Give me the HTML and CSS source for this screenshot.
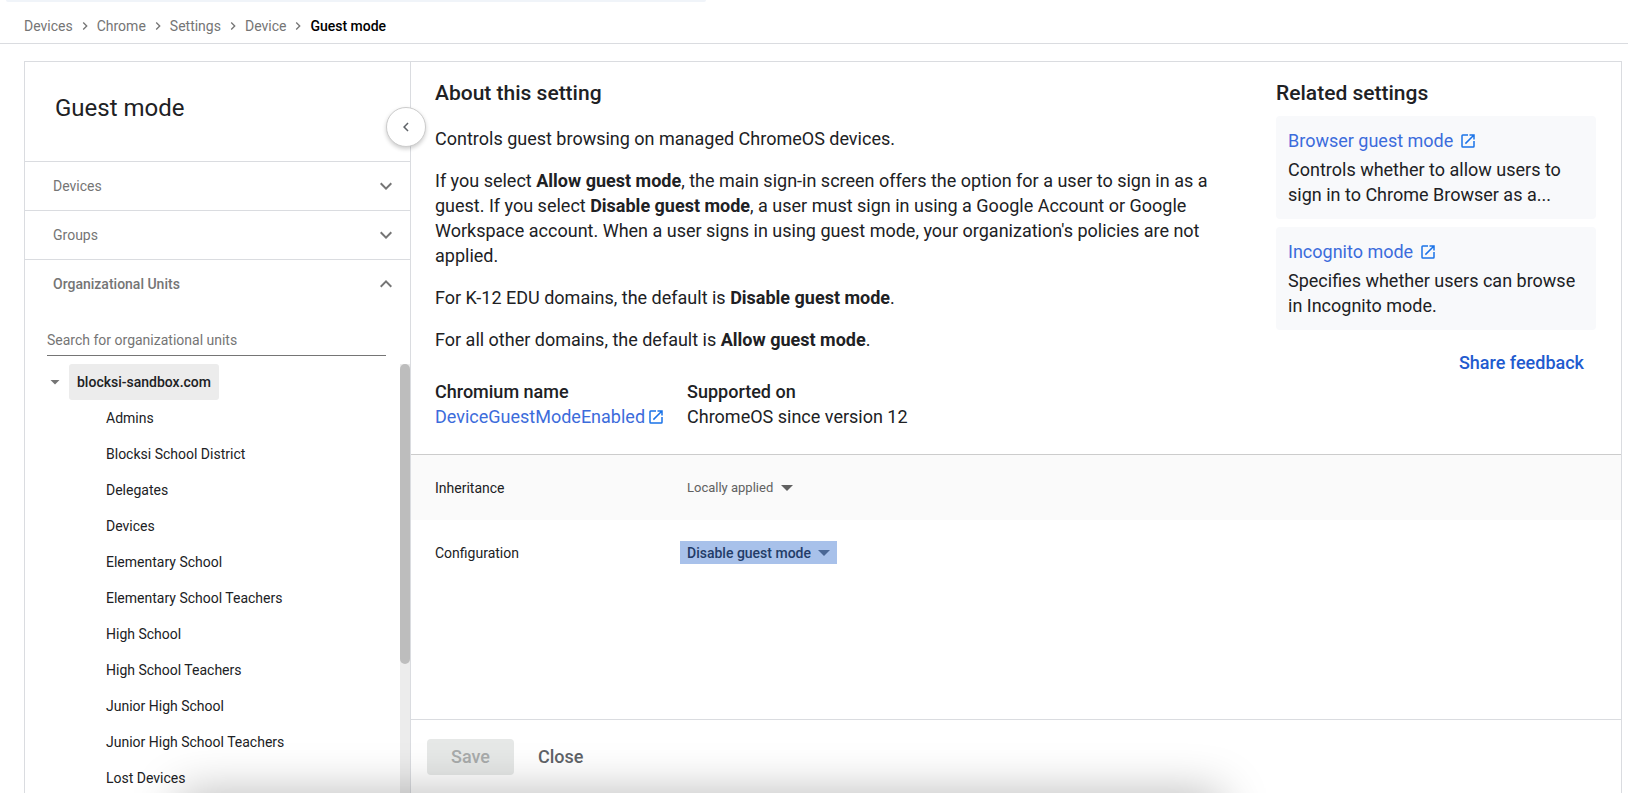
FILE: index.html
```html
<!DOCTYPE html>
<html lang="en">
<head>
    <meta charset="UTF-8">
    <meta name="viewport" content="width=device-width, initial-scale=1.0">
    <title>Guest mode</title>
    <link rel="stylesheet" href="styles.css">
</head>
<body>
    <svg class="sprite" aria-hidden="true">
        <symbol id="chevron" viewBox="0 0 24 24"><path d="M8.6 16.6 13.2 12 8.6 7.4 10 6l6 6-6 6z"/></symbol>
        <symbol id="expand" viewBox="0 0 24 24"><path d="M7.4 8.6 12 13.2l4.6-4.6L18 10l-6 6-6-6z"/></symbol>
        <symbol id="external" viewBox="0 0 24 24"><path d="M19 19H5V5h7V3H5a2 2 0 0 0-2 2v14a2 2 0 0 0 2 2h14a2 2 0 0 0 2-2v-7h-2v7zM14 3v2h3.6l-9.8 9.8 1.4 1.4L19 6.4V10h2V3h-7z"/></symbol>
    </svg>

    <div class="search-edge"></div>

    <nav class="breadcrumbs" aria-label="Breadcrumb">
        <a href="#">Devices</a>
        <svg><use href="#chevron"/></svg>
        <a href="#">Chrome</a>
        <svg><use href="#chevron"/></svg>
        <a href="#">Settings</a>
        <svg><use href="#chevron"/></svg>
        <a href="#">Device</a>
        <svg><use href="#chevron"/></svg>
        <span class="current">Guest mode</span>
    </nav>

    <div class="panel">
        <aside class="sidebar">
            <h1>Guest mode</h1>
            <button class="collapse" aria-label="Collapse sidebar"><svg><use href="#chevron"/></svg></button>
            <button class="section">Devices <svg><use href="#expand"/></svg></button>
            <button class="section">Groups <svg><use href="#expand"/></svg></button>
            <button class="section open">Organizational Units <svg><use href="#expand"/></svg></button>
            <input class="search" type="text" placeholder="Search for organizational units" aria-label="Search for organizational units">
            <div class="tree-area">
                <ul class="tree">
                    <li class="root"><span class="caret"></span><a href="#">blocksi-sandbox.com</a></li>
                    <li><a href="#">Admins</a></li>
                    <li><a href="#">Blocksi School District</a></li>
                    <li><a href="#">Delegates</a></li>
                    <li><a href="#">Devices</a></li>
                    <li><a href="#">Elementary School</a></li>
                    <li><a href="#">Elementary School Teachers</a></li>
                    <li><a href="#">High School</a></li>
                    <li><a href="#">High School Teachers</a></li>
                    <li><a href="#">Junior High School</a></li>
                    <li><a href="#">Junior High School Teachers</a></li>
                    <li><a href="#">Lost Devices</a></li>
                </ul>
                <div class="scrollbar"><div class="thumb"></div></div>
            </div>
        </aside>

        <main class="content">
            <div class="info">
                <section class="about">
                    <h2>About this setting</h2>
                    <p>Controls guest browsing on managed ChromeOS devices.</p>
                    <p>If you select <b>Allow guest mode</b>, the main sign-in screen offers the option for a user to sign in as a guest. If you select <b>Disable guest mode</b>, a user must sign in using a Google Account or Google Workspace account. When a user signs in using guest mode, your organization's policies are not applied.</p>
                    <p>For K-12 EDU domains, the default is <b>Disable guest mode</b>.</p>
                    <p>For all other domains, the default is <b>Allow guest mode</b>.</p>
                    <div class="facts">
                        <div>
                            <h3>Chromium name</h3>
                            <a href="#">DeviceGuestModeEnabled<svg><use href="#external"/></svg></a>
                        </div>
                        <div>
                            <h3>Supported on</h3>
                            <span>ChromeOS since version 12</span>
                        </div>
                    </div>
                </section>
                <section class="related">
                    <h2>Related settings</h2>
                    <div class="card">
                        <a href="#">Browser guest mode<svg><use href="#external"/></svg></a>
                        <p>Controls whether to allow users to sign in to Chrome Browser as a...</p>
                    </div>
                    <div class="card">
                        <a href="#">Incognito mode<svg><use href="#external"/></svg></a>
                        <p>Specifies whether users can browse in Incognito mode.</p>
                    </div>
                    <a class="feedback" href="#">Share feedback</a>
                </section>
            </div>

            <div class="row inheritance">
                <label for="inheritance">Inheritance</label>
                <span class="dropdown"><select id="inheritance"><option>Locally applied</option></select></span>
            </div>
            <div class="row">
                <label for="configuration">Configuration</label>
                <span class="dropdown selected"><select id="configuration"><option>Disable guest mode</option></select></span>
            </div>

            <div class="actions">
                <button class="save" disabled>Save</button>
                <button class="close">Close</button>
            </div>
        </main>
    </div>

    <div class="window-shadow"></div>
</body>
</html>
```

FILE: styles.css
```css
* {
    box-sizing: border-box;
}

body {
    margin: 0;
    height: 100vh;
    display: flex;
    flex-direction: column;
    overflow: hidden;
    background-color: #fff;
    color: #202124;
    font: 14px/20px Roboto, sans-serif;
}

a {
    color: inherit;
    text-decoration: none;
}

button, input, select {
    font: inherit;
    color: inherit;
    border: 0;
    background: none;
}

h1, h2, h3, p, ul {
    margin: 0;
    padding: 0;
}

svg {
    fill: currentColor;
    flex: none;
}

.sprite {
    display: none;
}

/* bottom edge of the search field in the top bar */
.search-edge {
    width: 43%;
    height: 2px;
    flex: none;
    margin-left: 6px;
    background-color: #f0f4f9;
    border-radius: 0 0 8px 8px;
}

.breadcrumbs {
    display: flex;
    align-items: center;
    flex: none;
    height: 42px;
    padding: 6px 24px 0;
    border-bottom: 1px solid #dadce0;
    color: #757575;
}

.breadcrumbs svg {
    width: 16px;
    height: 16px;
    margin: 0 4px;
}

.breadcrumbs .current {
    color: #000;
    font-weight: 500;
}

.panel {
    display: flex;
    flex: 1;
    min-height: 0;
    margin: 17px 6px 0 24px;
    border: 1px solid #dadce0;
    border-bottom: 0;
}

/* Sidebar */

.sidebar {
    position: relative;
    display: flex;
    flex-direction: column;
    flex: none;
    width: 386px;
    border-right: 1px solid #dadce0;
}

.sidebar h1 {
    flex: none;
    height: 99px;
    padding: 30px 30px 0;
    font-size: 24px;
    line-height: 32px;
    font-weight: 400;
}

.collapse {
    position: absolute;
    top: 45px;
    right: -16px;
    display: flex;
    align-items: center;
    justify-content: center;
    width: 40px;
    height: 40px;
    padding: 0;
    border: 1px solid #ccc;
    border-radius: 50%;
    background-color: #fff;
    box-shadow: 0 2px 4px rgba(0, 0, 0, 0.2);
    color: #5f6368;
}

.collapse svg {
    width: 18px;
    height: 18px;
    transform: rotate(180deg);
}

.section {
    display: flex;
    align-items: center;
    justify-content: space-between;
    flex: none;
    height: 49px;
    padding: 0 12px 0 28px;
    border-top: 1px solid #dadce0;
    color: #757575;
}

.section svg {
    width: 24px;
    height: 24px;
}

.section.open {
    font-weight: 500;
}

.section.open svg {
    transform: rotate(180deg);
}

.search {
    flex: none;
    height: 36px;
    margin: 12px 24px 0 22px;
    padding: 5px 0 0;
    border-bottom: 1px solid #757575;
    outline: 0;
}

.search::placeholder {
    color: #757575;
    opacity: 1;
}

.tree-area {
    display: flex;
    flex: 1;
    min-height: 0;
    margin-top: 8px;
}

.tree {
    flex: 1;
    overflow: hidden;
    list-style: none;
}

.tree li {
    height: 36px;
    padding: 8px 0 8px 81px;
}

.tree .root {
    display: flex;
    align-items: center;
    gap: 9px;
    padding: 0 0 0 25px;
    font-weight: 500;
}

.root a {
    padding: 8px;
    border-radius: 3px;
    background-color: #ececec;
}

.caret {
    width: 10px;
    height: 5px;
    background-color: #757575;
    clip-path: polygon(0 0, 100% 0, 50% 100%);
}

.scrollbar {
    width: 10px;
    background-color: #ececec;
}

.thumb {
    height: 70%;
    border-radius: 5px;
    background-color: #bdbdbd;
}

/* Setting details */

.content {
    display: flex;
    flex-direction: column;
    flex: 1;
    min-width: 0;
}

.info {
    display: flex;
    justify-content: space-between;
    padding: 17px 25px 25px 24px;
    border-bottom: 1px solid #ccc;
    font-size: 18px;
    line-height: 25px;
}

.info h2 {
    font-size: 21px;
    line-height: 28px;
    font-weight: 500;
}

.about {
    width: 778px;
}

.about h2 {
    padding-bottom: 2px;
}

.about p {
    margin-top: 17px;
}

.facts {
    display: flex;
    gap: 22px;
    margin-top: 27px;
}

.facts h3 {
    font-size: 18px;
    font-weight: 500;
}

.facts a, .card a {
    display: flex;
    align-items: center;
    gap: 2px;
    color: #3c6cdb;
}

.facts svg, .card svg {
    width: 18px;
    height: 18px;
    fill: #1a73e8;
}

.related {
    display: flex;
    flex-direction: column;
    width: 320px;
}

.card {
    min-height: 103px;
    margin-bottom: 8px;
    padding: 12px;
    border-radius: 4px;
    background-color: #f8f9fb;
}

.related h2 {
    margin-bottom: 9px;
}

.card a {
    gap: 6px;
    margin-bottom: 4px;
}

.feedback {
    align-self: flex-end;
    margin: 12px 12px 0;
    color: #1f5bcf;
    font-weight: 500;
}

.row {
    display: flex;
    align-items: center;
    height: 65px;
    padding: 0 24px;
}

.row label {
    width: 245px;
}

.inheritance {
    background-color: #fafafa;
}

.dropdown {
    position: relative;
    color: #616161;
    font-size: 13px;
}

.dropdown select {
    appearance: none;
    height: 23px;
    padding: 0 26px 0 7px;
    outline: 0;
}

.dropdown::after {
    content: "";
    position: absolute;
    top: 9px;
    right: 7px;
    width: 12px;
    height: 6px;
    background-color: currentColor;
    clip-path: polygon(0 0, 100% 0, 50% 100%);
    pointer-events: none;
}

.dropdown.selected {
    background-color: #a8c1ea;
    color: #4a6795;
    font-size: 14px;
}

.selected select {
    color: #233c68;
    font-weight: 500;
}

.actions {
    display: flex;
    align-items: flex-start;
    height: 74px;
    margin-top: auto;
    padding: 19px 16px;
    border-top: 1px solid #dadce0;
    font-size: 18px;
    font-weight: 500;
}

.actions button {
    height: 36px;
    padding: 0 24px;
    border-radius: 4px;
}

.save {
    background-color: #e6e8e7;
    color: #a8abab;
}

.close {
    color: #5f6368;
}

/* shadow cast by the window below */
.window-shadow {
    position: fixed;
    top: 100%;
    left: 11%;
    right: 25%;
    height: 100px;
    box-shadow: 0 0 48px rgba(0, 0, 0, 0.28);
    pointer-events: none;
}
```
